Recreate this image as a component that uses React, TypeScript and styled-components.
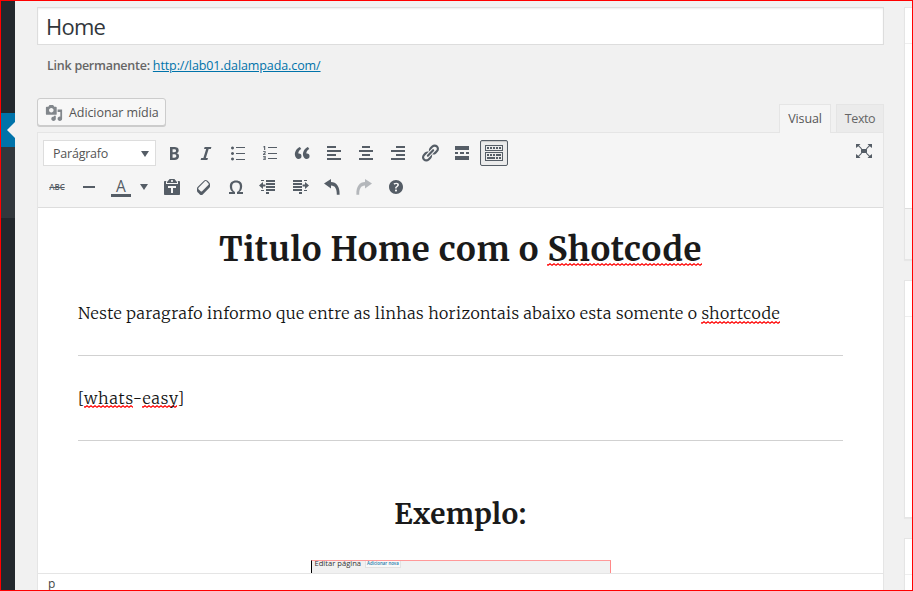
import React from 'react';
import styled, { createGlobalStyle, css } from 'styled-components';

const sans = '"Open Sans", "Noto Sans", sans-serif';
const serif = 'Merriweather, "Noto Serif", "DejaVu Serif Condensed", serif';
const ink = '#555d66';

const squiggle =
  "url(\"data:image/svg+xml,%3Csvg xmlns='http://www.w3.org/2000/svg' width='4' height='3'%3E%3Cpath d='M-1 1L1 2.3L3 .8L5 2.3' fill='none' stroke='%23f00' stroke-width='1.2'/%3E%3C/svg%3E\")";

const GlobalStyle = createGlobalStyle`
  body { margin: 0; }
  *, *::before, *::after { box-sizing: border-box; }
`;

const Frame = styled.div`
  display: flex;
  width: 913px;
  height: 591px;
  overflow: hidden;
  border: 1px solid #f00;
  background: #f1f1f1;
  color: #444;
  font: 12.5px/20px ${sans};
`;

const AdminMenu = styled.nav`
  display: flex;
  flex-direction: column;
  flex: 0 0 14px;
  background: #23282d;
`;

const MenuSpacer = styled.div`
  height: 112px;
`;

const CurrentItem = styled.div`
  display: flex;
  justify-content: flex-end;
  align-items: center;
  height: 34px;
  background: #0073aa;
`;

const MenuArrow = styled.span`
  border: 8px solid transparent;
  border-left: 0;
  border-right-color: #f1f1f1;
`;

const Submenu = styled.div`
  height: 71px;
  background: #32373c;
`;

const PostBody = styled.main`
  display: flex;
  flex-direction: column;
  flex: 0 0 847px;
  margin: 6px 20px 0 22px;
`;

const TitleField = styled.div`
  flex: none;
  height: 38px;
  padding: 0 8px;
  border: 1px solid #ddd;
  background: #fff;
  box-shadow: inset 0 1px 2px rgba(0, 0, 0, 0.07);
  color: #32373c;
  font-size: 22px;
  line-height: 37px;
  letter-spacing: -0.75px;
`;

const Permalink = styled.div`
  flex: none;
  margin-top: 11px;
  padding-left: 10px;
  color: #666;
  white-space: nowrap;
`;

const PermalinkLabel = styled.strong`
  margin-right: 3px;
  font-weight: 600;
  letter-spacing: -0.25px;
`;

const PermalinkUrl = styled.a`
  color: #0073aa;
  letter-spacing: -0.1px;
  text-decoration: underline;
  text-underline-offset: 1px;
`;

const EditorTools = styled.div`
  display: flex;
  flex: none;
  justify-content: space-between;
  height: 34px;
  margin-top: 22px;
`;

const MediaButton = styled.button`
  display: flex;
  align-items: center;
  gap: 6px;
  width: 129px;
  height: 28px;
  padding: 1px 0 0 7px;
  border: 1px solid #ccc;
  border-radius: 3px;
  background: #f7f7f7;
  box-shadow: 0 1px 0 #ccc;
  color: #555;
  font: 12.5px/20px ${sans};
  letter-spacing: -0.08px;
  white-space: nowrap;
`;

const Tabs = styled.div`
  display: flex;
  align-self: flex-end;
  gap: 5px;
`;

const Tab = styled.div<{ $active?: boolean; $width: number }>`
  position: relative;
  z-index: 1;
  width: ${p => p.$width}px;
  height: ${p => (p.$active ? 29 : 28)}px;
  margin-bottom: ${p => (p.$active ? -1 : 0)}px;
  border: 1px solid #e5e5e5;
  border-bottom: 0;
  background: ${p => (p.$active ? '#f5f5f5' : '#ebebeb')};
  color: ${p => (p.$active ? '#555' : '#666')};
  line-height: 28px;
  letter-spacing: ${p => (p.$active ? -0.1 : -0.4)}px;
  text-align: center;
`;

const Editor = styled.section`
  display: flex;
  flex-direction: column;
  flex: 1;
  min-height: 0;
  border: 1px solid #e5e5e5;
  border-bottom: 0;
  background: #fff;
`;

const Toolbar = styled.div`
  display: flex;
  flex: none;
  justify-content: space-between;
  height: 75px;
  padding: 7px 5px 0;
  border-bottom: 1px solid #ddd;
  background: #f5f5f5;
`;

const ButtonRows = styled.div`
  display: flex;
  flex-direction: column;
  gap: 8px;
`;

const ButtonRow = styled.div`
  display: flex;
  gap: 4px;
  height: 26px;
`;

const FormatSelect = styled.div`
  display: flex;
  align-items: center;
  justify-content: space-between;
  width: 113px;
  padding: 1px 6px 0 9px;
  border: 1px solid #ddd;
  background: #fff;
  color: #555;
  letter-spacing: -0.22px;
`;

const Caret = styled.span`
  border: 4px solid transparent;
  border-top: 6px solid ${ink};
  border-bottom: 0;
`;

const ToolButton = styled.button<{ $pressed?: boolean; $faded?: boolean }>`
  display: flex;
  align-items: center;
  justify-content: center;
  width: 28px;
  height: 26px;
  padding: 0;
  border: 1px solid transparent;
  border-radius: 2px;
  background: none;
  color: ${ink};
  font-family: ${sans};
  opacity: ${p => (p.$faded ? 0.4 : 1)};
  ${p =>
    p.$pressed &&
    css`
      border-color: ${ink};
      background: #ebebeb;
      box-shadow: inset 0 1px 1px rgba(0, 0, 0, 0.15);
    `}
`;

const StrikeLabel = styled.span`
  font-size: 8px;
  line-height: 10px;
  letter-spacing: -0.1px;
  font-weight: 600;
  text-decoration: line-through;
`;

const ColorButton = styled(ToolButton)`
  justify-content: space-between;
  width: 47px;
  padding: 0 5px 0 3px;
`;

const ColorLetter = styled.span`
  width: 20px;
  height: 19px;
  margin-top: 1px;
  border-bottom: 3px solid ${ink};
  font-size: 15.5px;
  font-weight: 500;
  line-height: 17px;
  text-align: center;
`;

const FullscreenButton = styled(ToolButton)`
  margin-top: -2px;
`;

const Icon = styled.svg<{ $size?: number }>`
  flex: none;
  width: ${p => p.$size ?? 20}px;
  height: ${p => p.$size ?? 20}px;
  fill: currentColor;
`;

const Canvas = styled.article`
  flex: none;
  height: 365px;
  padding: 22px 40px 0;
  overflow: hidden;
  color: #1a1a1a;
  font: 300 16px/28px ${serif};
  white-space: nowrap;
`;

const Heading = styled.h1`
  margin: 0 0 29px;
  font-size: 33px;
  font-weight: 700;
  line-height: 40px;
  letter-spacing: 0.63px;
  text-align: center;
`;

const Paragraph = styled.p<{ $tracking: number }>`
  margin: 0;
  color: #111;
  letter-spacing: ${p => p.$tracking}px;
`;

const Rule = styled.hr`
  height: 1px;
  margin: 28px 0;
  border: 0;
  background: #d1d1d1;
`;

const SubHeading = styled.h2`
  margin: 56px 0 0;
  font-size: 28px;
  font-weight: 700;
  line-height: 35px;
  letter-spacing: 0.5px;
  text-align: center;
`;

const Misspelled = styled.span<{ $drop: number }>`
  padding-bottom: 2px;
  background: ${squiggle} repeat-x 0 calc(100% - ${p => p.$drop}px);
`;

const Preview = styled.figure`
  display: flex;
  align-items: flex-start;
  gap: 4px;
  width: 300px;
  height: 60px;
  margin: 28px auto 0;
  padding-left: 3px;
  border-top: 1px solid #f99;
  border-right: 1px solid #f88;
  border-left: 1px solid #000;
  background: #f1f1f1;
  color: #333;
  font: 7.6px/4px ${sans};
`;

const PreviewAction = styled.span`
  height: 7px;
  padding: 0 1px;
  border: 1px solid #e2e2e2;
  border-top: 0;
  background: #f8f8f8;
  color: #2478a8;
  font-size: 4.4px;
  font-weight: 600;
  line-height: 5px;
`;

const StatusBar = styled.footer`
  flex: none;
  height: 24px;
  padding-left: 10px;
  border-top: 1px solid #e5e5e5;
  font-size: 12px;
  line-height: 19px;
`;

const SideColumn = styled.aside`
  display: flex;
  flex-direction: column;
  flex: none;
  gap: 20px;
  width: 260px;
  padding-top: 6px;
`;

const MetaBox = styled.section<{ $height: number }>`
  display: flex;
  flex-direction: column;
  flex: none;
  height: ${p => p.$height}px;
  border: 1px solid #e5e5e5;
  background: #fff;
  box-shadow: 0 1px 1px rgba(0, 0, 0, 0.04);
`;

const MetaHeader = styled.div`
  height: 36px;
  border-bottom: 1px solid #eee;
`;

const MetaFooter = styled.div`
  height: 51px;
  margin-top: auto;
  border-top: 1px solid #ddd;
  background: #f5f5f5;
`;

const paths = {
  bold: 'M6 4v13h4.54c1.37 0 2.46-.33 3.26-1 .8-.66 1.2-1.58 1.2-2.77 0-.84-.17-1.51-.51-2.01s-.9-.85-1.67-1.03v-.09c.57-.1 1.02-.4 1.36-.9s.51-1.13.51-1.91c0-1.14-.39-1.98-1.17-2.5C12.75 4.26 11.5 4 9.78 4H6zm2.57 5.15V6.26h1.36c.73 0 1.27.11 1.61.32.34.22.51.58.51 1.07 0 .54-.16.92-.47 1.15s-.82.35-1.51.35h-1.5zm0 2.19h1.6c1.44 0 2.16.53 2.16 1.61 0 .6-.17 1.05-.51 1.34s-.86.43-1.57.43H8.57v-3.38z',
  italic: 'M14.78 6h-2.13l-2.8 9h2.12l-.62 2H4.6l.62-2h2.14l2.8-9H8.03l.62-2h6.75z',
  bullets: 'M4.5 3.5a1.5 1.5 0 1 0 .01 0zM4.5 9a1.5 1.5 0 1 0 .01 0zM4.5 14.5a1.5 1.5 0 1 0 .01 0zM8 4h9v1H8zM8 10h9v1H8zM8 16h9v1H8z',
  numbers: 'M4 3h1.2v4H4.1V4.2L3.4 4.5V3.5zM3 8h2.6v2.2L4.3 11.2h1.4V12H3v-.9l1.6-1.4V8.8H3zM3 13h2.7v4H3v-.8h1.7v-.8H3.4v-.8h1.3v-.8H3zM8 4h9v1H8zM8 10h9v1H8zM8 15h9v1H8z',
  quote: 'M9.49 13.22c0-.74-.2-1.38-.61-1.9-.62-.78-1.83-.88-2.53-.72-.29-1.65 1.11-3.75 2.92-4.65L7.88 4c-2.73 1.3-5.42 4.28-4.96 8.05C3.21 14.43 4.59 16 6.54 16c.85 0 1.56-.25 2.12-.75s.83-1.18.83-2.03zm8.05 0c0-.74-.2-1.38-.61-1.9-.63-.78-1.83-.88-2.53-.72-.29-1.65 1.11-3.75 2.92-4.65L15.93 4c-2.73 1.3-5.41 4.28-4.95 8.05.29 2.38 1.66 3.95 3.61 3.95.85 0 1.56-.25 2.12-.75s.83-1.18.83-2.03z',
  left: 'M12 5V3H3v2h9zm5 4V7H3v2h14zm-5 4v-2H3v2h9zm5 4v-2H3v2h14z',
  center: 'M14 5V3H6v2h8zm3 4V7H3v2h14zm-3 4v-2H6v2h8zm3 4v-2H3v2h14z',
  right: 'M17 5V3H8v2h9zm0 4V7H3v2h14zm0 4v-2H8v2h9zm0 4v-2H3v2h14z',
  link: 'M17.74 2.76c1.68 1.69 1.68 4.41 0 6.1l-1.53 1.52c-1.12 1.12-2.7 1.47-4.14 1.09l2.62-2.61.76-.77.76-.76c.84-.84.84-2.2 0-3.04-.84-.85-2.2-.85-3.04 0l-.77.76-3.38 3.38c-.37-1.44-.02-3.02 1.1-4.14l1.52-1.53c1.69-1.68 4.42-1.68 6.1 0zM8.59 13.43l5.34-5.34c.42-.42.42-1.1 0-1.52-.44-.43-1.13-.39-1.53 0l-5.33 5.34c-.42.42-.42 1.1 0 1.52.44.43 1.13.39 1.52 0zm-.76 2.29l4.14-4.15c.38 1.44.03 3.02-1.09 4.14l-1.52 1.53c-1.69 1.68-4.41 1.68-6.1 0-1.68-1.68-1.68-4.42 0-6.1l1.53-1.52c1.12-1.12 2.7-1.47 4.14-1.1l-4.14 4.15c-.85.84-.85 2.2 0 3.05.84.84 2.2.84 3.04 0z',
  more: 'M17 7V3H3v4h14zM6 11V9H3v2h3zm6 0V9H8v2h4zm5 0V9h-3v2h3zm0 6v-4H3v4h14z',
  sink: 'M19 2v6H1V2h18zm-1 5V3H2v4h16zM5 4v2H3V4h2zm3 0v2H6V4h2zm3 0v2H9V4h2zm3 0v2h-2V4h2zm3 0v2h-2V4h2zm2 5v9H1V9h18zm-1 8v-7H2v7h16zM5 11v2H3v-2h2zm3 0v2H6v-2h2zm3 0v2H9v-2h2zm6 0v2h-5v-2h5zm-6 3v2H3v-2h8zm3 0v2h-2v-2h2zm3 0v2h-2v-2h2z',
  minus: 'M4 9h12v2H4z',
  paste: 'M12.38 2L15 5v1H5V5l2.64-3h4.74zM10 5c.55 0 1-.44 1-1 0-.55-.45-1-1-1s-1 .45-1 1c0 .56.45 1 1 1zm5.45-1H17c.55 0 1 .45 1 1v12c0 .56-.45 1-1 1H3c-.55 0-1-.44-1-1V5c0-.55.45-1 1-1h1.55L4 4.63V7h12V4.63zM14 11V9H6v2h3v5h2v-5h3z',
  eraser: 'M14.29 4.59l1.1 1.11c.41.4.61.94.61 1.47v2.12c0 .53-.2 1.07-.61 1.47l-6.63 6.63c-.4.41-.94.61-1.47.61s-1.07-.2-1.47-.61l-1.11-1.1-1.1-1.11c-.41-.4-.61-.94-.61-1.47v-2.12c0-.54.2-1.07.61-1.48l6.63-6.62c.4-.41.94-.61 1.47-.61s1.06.2 1.47.61zm-6.21 9.7l6.42-6.42c.39-.39.39-1.03 0-1.43L12.36 4.3c-.19-.19-.45-.29-.72-.29s-.52.1-.71.29l-6.42 6.42c-.39.4-.39 1.04 0 1.43l2.14 2.14c.38.38 1.04.38 1.43 0z',
  omega: 'M10 5.4c1.27 0 2.24.36 2.91 1.08.66.71 1 1.76 1 3.13 0 1.28-.23 2.37-.69 3.27-.47.89-1.27 1.52-2.22 2.12v2h6v-2h-3.69c.92-.64 1.62-1.34 2.12-2.34.49-1.01.74-2.13.74-3.35 0-1.78-.55-3.19-1.65-4.22S11.92 3.54 10 3.54s-3.43.53-4.52 1.57c-1.1 1.04-1.65 2.44-1.65 4.2 0 1.21.24 2.31.73 3.33.48 1.01 1.19 1.71 2.1 2.36H3v2h6v-2c-.98-.64-1.8-1.28-2.24-2.17-.45-.89-.67-1.96-.67-3.22 0-1.37.33-2.41 1-3.13C7.75 5.76 8.72 5.4 10 5.4z',
  outdent: 'M3 3h3v1H3zM8 3h9v2H8zM8 6h9v2H8zM8 9h9v2H8zM8 12h9v2H8zM8 15h3v2H8zM3 13h3v1H3zM1 8.5L5 5v2.4h2.4v2.2H5V12z',
  indent: 'M14 3h3v1h-3zM3 3h9v2H3zM3 6h9v2H3zM3 9h9v2H3zM3 12h9v2H3zM9 15h3v2H9zM14 13h3v1h-3zM19 8.5L15 5v2.4h-2.4v2.2H15V12z',
  undo: 'M2 6.5L9 2v3.1c5.3.2 8.9 4 8.6 12.6h-2.8c.1-6-1.6-9.1-5.8-9.2v3.1z',
  redo: 'M18 6.5L11 2v3.1c-5.3.2-8.9 4-8.6 12.6h2.8c-.1-6 1.6-9.1 5.8-9.2v3.1z',
  help: 'M17 10c0-3.87-3.14-7-7-7-3.87 0-7 3.13-7 7s3.13 7 7 7c3.86 0 7-3.13 7-7zm-6.3 1.48H9.14v-.43c0-.38.08-.7.24-.98s.46-.57.88-.89c.41-.29.68-.53.81-.71.14-.18.2-.39.2-.62 0-.25-.09-.44-.28-.58-.19-.13-.45-.19-.79-.19-.58 0-1.25.19-2 .57l-.64-1.28c.87-.49 1.8-.74 2.77-.74.81 0 1.45.2 1.92.58.48.39.71.91.71 1.55 0 .43-.09.8-.29 1.11-.19.32-.57.67-1.11 1.06-.38.28-.61.49-.71.63-.1.15-.15.34-.15.57v.35zm-1.47 2.74c-.18-.17-.27-.42-.27-.73 0-.33.08-.58.26-.75s.43-.25.77-.25c.32 0 .57.09.75.26s.27.42.27.74c0 .3-.09.55-.27.72-.18.18-.43.27-.75.27-.33 0-.58-.09-.76-.26z',
  expand: 'M7 8h6v4H7zM2 3h4.5L5 4.5l3 3-.7.7-3-3L2 7zM18 3h-4.5L15 4.5l-3 3 .7.7 3-3L18 7zM2 17h4.5L5 15.5l3-3-.7-.7-3 3L2 13zM18 17h-4.5L15 15.5l-3-3 .7-.7 3 3L18 13z',
  media: 'M13 11V4c0-.55-.45-1-1-1h-1.67L9 1H5L3.67 3H2c-.55 0-1 .45-1 1v7c0 .55.45 1 1 1h10c.55 0 1-.45 1-1zM7 4.5c1.38 0 2.5 1.12 2.5 2.5S8.38 9.5 7 9.5 4.5 8.38 4.5 7 5.62 4.5 7 4.5zM14 6h5v10.5c0 1.38-1.12 2.5-2.5 2.5S14 17.88 14 16.5s1.12-2.5 2.5-2.5c.17 0 .34.02.5.05V9h-3V6zm-4 8.05V13h2v3.5c0 1.38-1.12 2.5-2.5 2.5S7 17.88 7 16.5 8.12 14 9.5 14c.17 0 .34.02.5.05z',
};

type IconName = keyof typeof paths;

const MediaIcon = styled(Icon)`
  fill: #82878c;
`;

const Glyph = ({ name }: { name: IconName }) => (
  <Icon viewBox="0 0 20 20" aria-hidden>
    <path fillRule="evenodd" d={paths[name]} />
  </Icon>
);

const firstRow: IconName[] = ['bold', 'italic', 'bullets', 'numbers', 'quote', 'left', 'center', 'right', 'link', 'more', 'sink'];
const secondRow: IconName[] = ['paste', 'eraser', 'omega', 'outdent', 'indent', 'undo', 'redo', 'help'];

export default function App() {
  return (
    <>
      <GlobalStyle />
      <Frame>
        <AdminMenu>
          <MenuSpacer />
          <CurrentItem>
            <MenuArrow />
          </CurrentItem>
          <Submenu />
        </AdminMenu>
        <PostBody>
          <TitleField>Home</TitleField>
          <Permalink>
            <PermalinkLabel>Link permanente:</PermalinkLabel>
            <PermalinkUrl>http://lab01.dalampada.com/</PermalinkUrl>
          </Permalink>
          <EditorTools>
            <MediaButton>
              <MediaIcon $size={18} viewBox="0 0 20 20" aria-hidden>
                <path fillRule="evenodd" d={paths.media} />
              </MediaIcon>
              Adicionar mídia
            </MediaButton>
            <Tabs>
              <Tab $active $width={52}>Visual</Tab>
              <Tab $width={48}>Texto</Tab>
            </Tabs>
          </EditorTools>
          <Editor>
            <Toolbar>
              <ButtonRows>
                <ButtonRow>
                  <FormatSelect>
                    Parágrafo
                    <Caret />
                  </FormatSelect>
                  {firstRow.map(name => (
                    <ToolButton key={name} $pressed={name === 'sink'}>
                      <Glyph name={name} />
                    </ToolButton>
                  ))}
                </ButtonRow>
                <ButtonRow>
                  <ToolButton>
                    <StrikeLabel>ABC</StrikeLabel>
                  </ToolButton>
                  <ToolButton>
                    <Glyph name="minus" />
                  </ToolButton>
                  <ColorButton>
                    <ColorLetter>A</ColorLetter>
                    <Caret />
                  </ColorButton>
                  {secondRow.map(name => (
                    <ToolButton key={name} $faded={name === 'redo'}>
                      <Glyph name={name} />
                    </ToolButton>
                  ))}
                </ButtonRow>
              </ButtonRows>
              <FullscreenButton>
                <Glyph name="expand" />
              </FullscreenButton>
            </Toolbar>
            <Canvas>
              <Heading>
                Titulo Home com o <Misspelled $drop={6}>Shotcode</Misspelled>
              </Heading>
              <Paragraph $tracking={0.395}>
                Neste paragrafo informo que entre as linhas horizontais abaixo esta somente o{' '}
                <Misspelled $drop={1}>shortcode</Misspelled>
              </Paragraph>
              <Rule />
              <Paragraph $tracking={0.85}>
                [<Misspelled $drop={2}>whats</Misspelled>-<Misspelled $drop={2}>easy</Misspelled>]
              </Paragraph>
              <Rule />
              <SubHeading>Exemplo:</SubHeading>
              <Preview>
                Editar página
                <PreviewAction>Adicionar nova</PreviewAction>
              </Preview>
            </Canvas>
            <StatusBar>p</StatusBar>
          </Editor>
        </PostBody>
        <SideColumn>
          <MetaBox $height={253}>
            <MetaHeader />
            <MetaFooter />
          </MetaBox>
          <MetaBox $height={238}>
            <MetaHeader />
          </MetaBox>
          <MetaBox $height={238}>
            <MetaHeader />
          </MetaBox>
        </SideColumn>
      </Frame>
    </>
  );
}
